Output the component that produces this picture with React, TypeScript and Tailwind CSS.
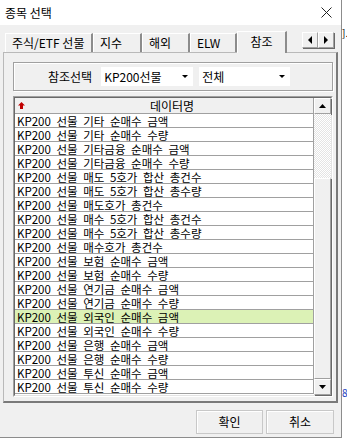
import React from "react";

const rows = [
  "KP200 선물 기타 순매수 금액",
  "KP200 선물 기타 순매수 수량",
  "KP200 선물 기타금융 순매수 금액",
  "KP200 선물 기타금융 순매수 수량",
  "KP200 선물 매도 5호가 합산 총건수",
  "KP200 선물 매도 5호가 합산 총수량",
  "KP200 선물 매도호가 총건수",
  "KP200 선물 매수 5호가 합산 총건수",
  "KP200 선물 매수 5호가 합산 총수량",
  "KP200 선물 매수호가 총건수",
  "KP200 선물 보험 순매수 금액",
  "KP200 선물 보험 순매수 수량",
  "KP200 선물 연기금 순매수 금액",
  "KP200 선물 연기금 순매수 수량",
  "KP200 선물 외국인 순매수 금액",
  "KP200 선물 외국인 순매수 수량",
  "KP200 선물 은행 순매수 금액",
  "KP200 선물 은행 순매수 수량",
  "KP200 선물 투신 순매수 금액",
  "KP200 선물 투신 순매수 수량",
];

const tabs = [
  { label: "주식/ETF 선물", w: "w-[88px]" },
  { label: "지수", w: "w-[49px]" },
  { label: "해외", w: "w-[48px]" },
  { label: "ELW", w: "w-[47px]" },
];

const raised =
  "bg-[#f0f0f0] border-t border-l border-white border-r border-b border-r-[#a0a0a0] border-b-[#a0a0a0] shadow-[1px_1px_0_#696969]";

function Arrow({ dir, w = 7, h = 4 }: { dir: "up" | "down" | "left" | "right"; w?: number; h?: number }) {
  const pts =
    dir === "up"
      ? `0,${h} ${w / 2},0 ${w},${h}`
      : dir === "down"
      ? `0,0 ${w},0 ${w / 2},${h}`
      : dir === "left"
      ? `${w},0 ${w},${h} 0,${h / 2}`
      : `0,0 0,${h} ${w},${h / 2}`;
  return (
    <svg width={w} height={h} viewBox={`0 0 ${w} ${h}`} className="block">
      <polygon points={pts} fill="#000" />
    </svg>
  );
}

function Combo({ text, w }: { text: string; w: string }) {
  return (
    <div className={`${w} h-[19px] bg-white flex items-center justify-between pl-[3px] pr-[5px]`}>
      <span className="text-[12px] leading-none">{text}</span>
      <Arrow dir="down" w={6} h={3} />
    </div>
  );
}

export default function App() {
  return (
    <div className="w-[347px] h-[440px] bg-white flex overflow-hidden text-black font-['Noto_Sans_CJK_KR','Noto_Sans',sans-serif]">
      <div className="w-[342px] h-[438px] shrink-0 flex flex-col bg-[#f0f0f0] border-r border-b border-[#8c8c8c]">
        {/* title bar */}
        <div className="h-[25px] bg-white flex items-center justify-between pl-[5px] pr-[9px]">
          <span className="text-[12px] leading-none">종목 선택</span>
          <svg width="11" height="11" viewBox="0 0 11 11">
            <path d="M0.5 0.5 L10.5 10.5 M10.5 0.5 L0.5 10.5" stroke="#222" strokeWidth="1" />
          </svg>
        </div>

        <div className="flex-1 flex flex-col px-[3px]">
          {/* tabs */}
          <div className="h-[27px] flex items-end pl-[2px]">
            {tabs.map((t) => (
              <div
                key={t.label}
                className={`${t.w} h-[19px] flex items-center pl-[6px] text-[12px] leading-none bg-[#f0f0f0] border-t border-l border-white border-r-2 border-r-[#8c8c8c]`}
              >
                {t.label}
              </div>
            ))}
            <div className="w-[50px] h-[22px] -mb-px relative z-10 flex items-start pt-[4px] justify-center text-[12px] leading-none bg-[#f0f0f0] border-t border-l border-white border-r-2 border-r-[#8c8c8c]">
              참조
            </div>
            <div className="self-start mt-[7px] ml-auto mr-[4px] flex">
              <div className={`w-[16px] h-[16px] flex items-center justify-center ${raised}`}>
                <Arrow dir="left" w={4} h={8} />
              </div>
              <div className={`w-[16px] h-[16px] flex items-center justify-center ${raised}`}>
                <Arrow dir="right" w={4} h={8} />
              </div>
            </div>
          </div>

          {/* tab panel */}
          <div className="h-[351px] flex flex-col pl-[9px] pr-[3px] pt-[9px] border-t border-l border-[#b9b9b9] border-r-2 border-b-2 border-r-[#7a7a7a] border-b-[#7a7a7a]">
            <div className="h-[29px] flex items-center pl-[34px] border border-[#a0a0a0] shadow-[inset_1px_1px_0_#fff,1px_1px_0_#fff]">
              <span className="text-[12px] leading-none mr-[9px]">참조선택</span>
              <Combo text="KP200선물" w="w-[92px]" />
              <div className="w-[6px]" />
              <Combo text="전체" w="w-[91px]" />
            </div>

            {/* list */}
            <div className="mt-[5px] h-[301px] border-t border-l border-[#a0a0a0] border-r border-b border-r-white border-b-white">
              <div className="h-full flex border-t border-l border-[#696969] border-r border-b border-r-[#e3e3e3] border-b-[#e3e3e3]">
                <div className="flex-1 flex flex-col bg-white">
                  <div className="h-[16px] flex items-center bg-[#f0f0f0] border-b border-r border-[#a0a0a0]">
                    <svg width="7" height="7" viewBox="0 0 7 7" className="ml-[3px]">
                      <polygon points="3.5,0 7,3.5 5,3.5 5,7 2,7 2,3.5 0,3.5" fill="#c00000" />
                    </svg>
                    <span className="flex-1 text-center pl-[6px] text-[12px] leading-none">데이터명</span>
                  </div>
                  {rows.map((r, i) => (
                    <div
                      key={r}
                      className={`h-[14px] flex items-center pl-[2px] text-[11.5px] leading-[12px] whitespace-nowrap [word-spacing:3px] border-b border-r border-[#a0a0a0] ${
                        i === 14 ? "bg-[#dcf2b6]" : "bg-white"
                      }`}
                    >
                      {r}
                    </div>
                  ))}
                </div>
                {/* scrollbar */}
                <div className="w-[17px] flex flex-col">
                  <div className={`h-[16px] flex items-center justify-center ${raised}`}>
                    <Arrow dir="up" />
                  </div>
                  <div className="h-[64px] bg-[repeating-conic-gradient(#e4e4e4_0_25%,#ffffff_0_50%)] bg-[length:2px_2px]" />
                  <div className={`flex-1 ${raised}`} />
                  <div className={`h-[16px] flex items-center justify-center ${raised}`}>
                    <Arrow dir="down" />
                  </div>
                </div>
              </div>
            </div>
          </div>

          {/* buttons */}
          <div className="flex-1 flex justify-end items-start pt-[7px] pr-[4px] gap-[3px]">
            <button className="w-[67px] h-[24px] text-[12px] leading-none bg-[#f0f0f0] border border-[#c8c8c8] shadow-[inset_1px_1px_0_#fff]">
              확인
            </button>
            <button className="w-[68px] h-[24px] text-[12px] leading-none bg-[#f0f0f0] border border-[#c8c8c8] shadow-[inset_1px_1px_0_#fff]">
              취소
            </button>
          </div>
        </div>
      </div>

      {/* background strip behind the dialog */}
      <div className="flex-1 flex flex-col text-[10px] leading-none">
        <div className="h-[28px]" />
        <span className="text-black">].</span>
        <div className="h-[350px]" />
        <span className="text-[#2040c0]">8,</span>
      </div>
    </div>
  );
}
